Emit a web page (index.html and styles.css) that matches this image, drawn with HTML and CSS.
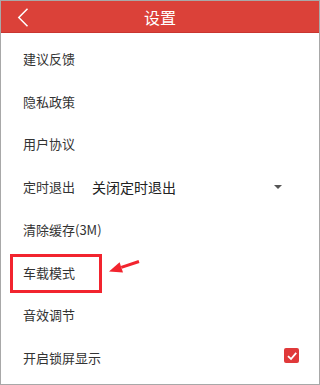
FILE: index.html
```html
<!DOCTYPE html>
<html lang="zh">
<head>
<meta charset="utf-8">
<link rel="stylesheet" href="styles.css">
</head>
<body>
<div class="frame">
  <header class="bar">
    <svg class="back" width="12" height="19" viewBox="0 0 12 19"><path d="M10.5 0.8 L1.8 9.5 L10.5 18.2" fill="none" stroke="#fff" stroke-width="1.5"/></svg>
    <div class="title">设置</div>
  </header>
  <ul class="list">
    <li class="row">建议反馈</li>
    <li class="row">隐私政策</li>
    <li class="row">用户协议</li>
    <li class="row"><span>定时退出</span><span class="value">关闭定时退出</span><span class="caret"></span></li>
    <li class="row">清除缓存(3M)</li>
    <li class="row highlight"><span>车载模式</span>
      <span class="mark"></span>
      <svg class="arrow" width="34" height="16" viewBox="0 0 34 16"><path d="M32 1.5 L14.3 7.4" stroke="#f2242e" stroke-width="3" fill="none"/><path d="M2 11.5 L16 12.6 L12.6 2.2 Z" fill="#f2242e"/></svg>
    </li>
    <li class="row">音效调节</li>
    <li class="row"><span>开启锁屏显示</span><span class="check"><svg width="14" height="14" viewBox="0 0 14 14"><path d="M3 7.2 L6 10 L11.2 3.8" fill="none" stroke="#fff" stroke-width="1.8"/></svg></span></li>
  </ul>
</div>
</body>
</html>
```
FILE: styles.css
```css
* { box-sizing: border-box; }
html, body { margin: 0; padding: 0; }
body { width: 320px; height: 385px; background: #fff; font-family: "Noto Sans CJK SC", "Noto Sans", sans-serif; }
.frame { width: 320px; height: 385px; border: 1px solid #a8a8a8; position: relative; overflow: hidden; }
.bar { height: 32px; background: #db4139; border-bottom: 1px solid #c93530; position: relative; display: flex; align-items: center; justify-content: center; }
.back { position: absolute; left: 16px; top: 7px; }
.title { color: #fff; font-size: 16px; line-height: 1; }
.list { list-style: none; margin: 0; padding: 4px 0 0 0; }
.row { height: 42.75px; display: flex; align-items: center; padding-left: 22px; font-size: 13px; color: #333; position: relative; }
.value { margin-left: 17px; font-size: 14px; color: #222; }
.caret { position: absolute; left: 273px; top: 20px; width: 0; height: 0; border-left: 4px solid transparent; border-right: 4px solid transparent; border-top: 4px solid #555; }
.mark { position: absolute; left: 9px; top: 3px; width: 92px; height: 39px; border: 3px solid #f2242e; }
.arrow { position: absolute; left: 106px; top: 9px; }
.check { position: absolute; left: 283px; top: 12px; width: 15px; height: 15px; background: #e0393a; border-radius: 2px; display: flex; align-items: center; justify-content: center; }
.check svg { display: block; }
```
